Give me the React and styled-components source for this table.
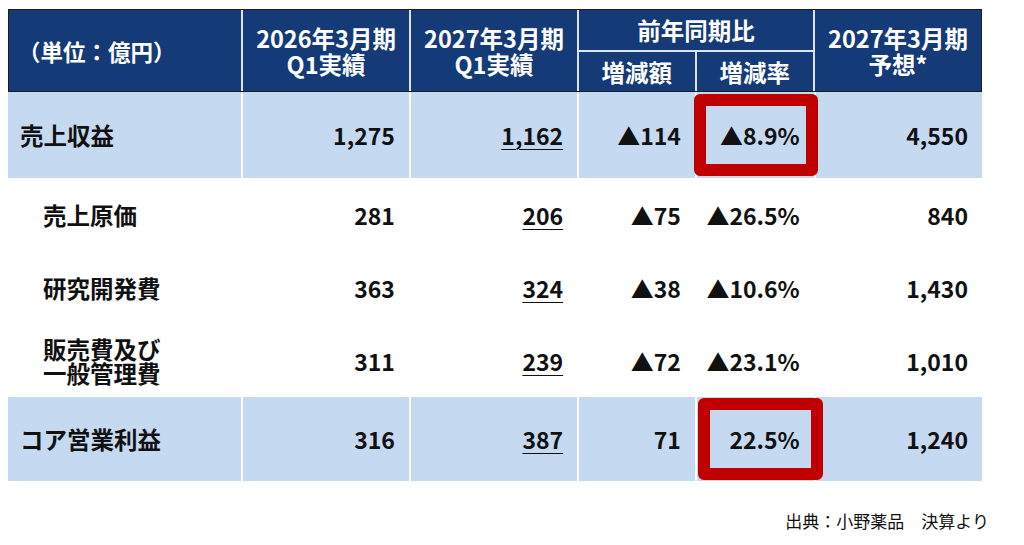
import React from "react";
import styled, { createGlobalStyle } from "styled-components";

const GlobalStyle = createGlobalStyle`
  html, body {
    margin: 0;
    padding: 0;
    background: #ffffff;
  }
  body {
    font-family: "Noto Sans CJK JP", "Noto Sans", sans-serif;
    color: #111111;
  }
`;

const COLUMNS = "235fr 168fr 168fr 117fr 118fr 168fr";

const Page = styled.div`
  width: 1024px;
  height: 545px;
  box-sizing: border-box;
  padding: 9px 0 0 8px;
`;

const Sheet = styled.div`
  width: 974px;
`;

// header
const HeaderGrid = styled.div`
  display: grid;
  grid-template-columns: ${COLUMNS};
  grid-template-rows: 40px 39px;
  gap: 2px;
  background: #dbe3ef;
  border: 1px solid #1c1c1c;
`;

const HeadCell = styled.div`
  background: #143a77;
  color: #ffffff;
  font-size: ${(p) => (p.$left ? "22.5px" : "23.5px")};
  font-weight: 700;
  line-height: 26px;
  display: flex;
  flex-direction: column;
  align-items: ${(p) => (p.$left ? "flex-start" : "center")};
  justify-content: center;
  padding-left: ${(p) => (p.$left ? "9px" : "0")};
  grid-row: ${(p) => p.$row || "auto"};
  grid-column: ${(p) => p.$col || "auto"};
`;

// body
const Row = styled.div`
  display: grid;
  grid-template-columns: ${COLUMNS};
  gap: 2px;
  height: ${(p) => p.$height}px;
  background: #ffffff;
`;

const Cell = styled.div`
  position: relative;
  background: ${(p) => (p.$shade ? "#c5d9f1" : "transparent")};
  display: flex;
  align-items: center;
  justify-content: flex-end;
  padding-right: 14px;
  font-size: 23px;
  font-weight: 700;
  line-height: 24px;
  color: #111111;
`;

const LabelCell = styled(Cell)`
  justify-content: flex-start;
  padding-left: ${(p) => (p.$sub ? "35px" : "12px")};
  padding-right: 0;
  font-size: 23.5px;
`;

const Underlined = styled.span`
  text-decoration: underline;
  text-decoration-thickness: 1px;
  text-underline-offset: 4px;
`;

const Value = styled.span`
  position: relative;
  z-index: 1;
`;

const Highlight = styled.span`
  position: absolute;
  top: ${(p) => p.$inset[0]}px;
  right: ${(p) => p.$inset[1]}px;
  bottom: ${(p) => p.$inset[2]}px;
  left: ${(p) => p.$inset[3]}px;
  border: 12px solid #c00000;
  border-radius: 6px;
  z-index: 2;
`;

const Source = styled.div`
  margin-top: 29px;
  width: 981px;
  text-align: right;
  font-size: 17px;
  line-height: 22px;
  font-weight: 400;
  color: #111111;
`;

const rows = [
  {
    label: "売上収益",
    prev: "1,275",
    cur: "1,162",
    diff: "▲114",
    rate: "▲8.9%",
    plan: "4,550",
    shade: true,
    height: 86,
    box: [2, -4, 2, -3],
  },
  { label: "売上原価", prev: "281", cur: "206", diff: "▲75", rate: "▲26.5%", plan: "840", sub: true, height: 73 },
  { label: "研究開発費", prev: "363", cur: "324", diff: "▲38", rate: "▲10.6%", plan: "1,430", sub: true, height: 73 },
  {
    label: ["販売費及び", "一般管理費"],
    prev: "311",
    cur: "239",
    diff: "▲72",
    rate: "▲23.1%",
    plan: "1,010",
    sub: true,
    height: 73,
  },
  {
    label: "コア営業利益",
    prev: "316",
    cur: "387",
    diff: "71",
    rate: "22.5%",
    plan: "1,240",
    shade: true,
    height: 84,
    box: [1, -9, 1, 1],
  },
];

const Label = ({ text }) =>
  Array.isArray(text) ? (
    <span>
      {text[0]}
      <br />
      {text[1]}
    </span>
  ) : (
    <span>{text}</span>
  );

export default function App() {
  return (
    <Page>
      <GlobalStyle />
      <Sheet>
        <HeaderGrid>
          <HeadCell $row="1 / 3" $left>
            （単位：億円）
          </HeadCell>
          <HeadCell $row="1 / 3">
            <span>2026年3月期</span>
            <span>Q1実績</span>
          </HeadCell>
          <HeadCell $row="1 / 3">
            <span>2027年3月期</span>
            <span>Q1実績</span>
          </HeadCell>
          <HeadCell $col="4 / 6">前年同期比</HeadCell>
          <HeadCell $row="1 / 3" $col="6">
            <span>2027年3月期</span>
            <span>予想*</span>
          </HeadCell>
          <HeadCell $row="2" $col="4">増減額</HeadCell>
          <HeadCell $row="2" $col="5">増減率</HeadCell>
        </HeaderGrid>

        {rows.map((r, i) => (
          <Row key={i} $height={r.height}>
            <LabelCell $shade={r.shade} $sub={r.sub}>
              <Label text={r.label} />
            </LabelCell>
            <Cell $shade={r.shade}>{r.prev}</Cell>
            <Cell $shade={r.shade}>
              <Underlined>{r.cur}</Underlined>
            </Cell>
            <Cell $shade={r.shade}>{r.diff}</Cell>
            <Cell $shade={r.shade}>
              <Value>{r.rate}</Value>
              {r.box && <Highlight $inset={r.box} />}
            </Cell>
            <Cell $shade={r.shade}>{r.plan}</Cell>
          </Row>
        ))}

        <Source>出典：小野薬品　決算より</Source>
      </Sheet>
    </Page>
  );
}
